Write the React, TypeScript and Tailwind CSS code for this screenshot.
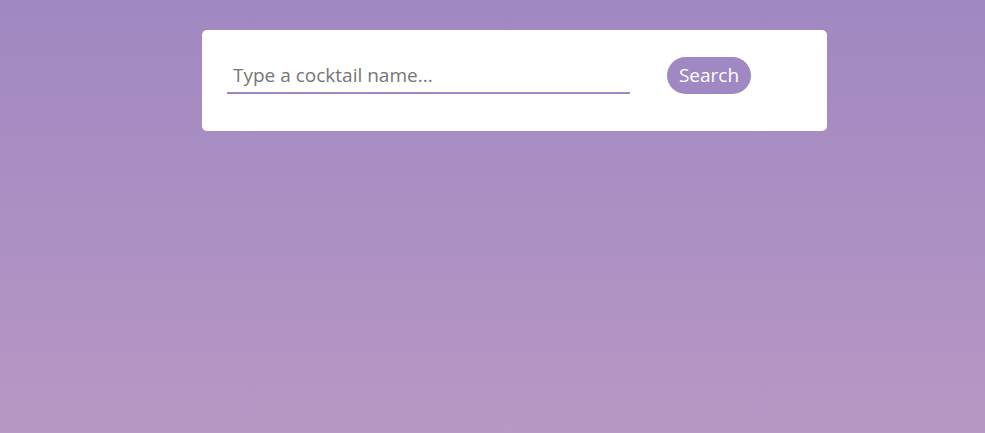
import React, { useState } from 'react';

const App = () => {
  const [query, setQuery] = useState('');

  return (
    <div className="min-h-[433px] w-full bg-gradient-to-b from-[#a088c2] to-[#b897c4] pt-[30px] font-['Open_Sans',sans-serif]">
      <div className="ml-[202px] w-[625px] rounded-[5px] bg-white px-[25px] pt-[27px] pb-[37px]">
        <form
          className="flex items-center"
          onSubmit={(e) => e.preventDefault()}
        >
          <input
            type="text"
            value={query}
            onChange={(e) => setQuery(e.target.value)}
            placeholder="Type a cocktail name..."
            className="h-[37px] w-[403px] border-b-2 border-[#a088c2] px-[6px] text-[19px] text-gray-800 outline-none placeholder:text-[#767676]"
          />
          <button
            type="submit"
            className="ml-[37px] h-[37px] w-[84px] rounded-full bg-[#a088c2] text-[19px] text-white"
          >
            Search
          </button>
        </form>
      </div>
    </div>
  );
};

export default App;
